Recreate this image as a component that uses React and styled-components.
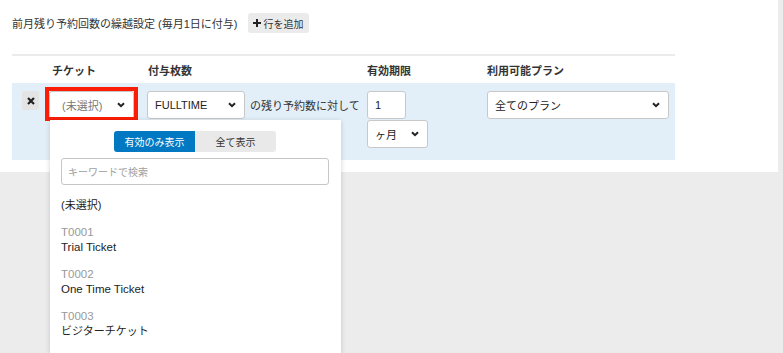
import React from 'react'
import styled, { createGlobalStyle } from 'styled-components'

const GlobalStyle = createGlobalStyle`
  html, body {
    margin: 0;
    height: 100%;
  }
  body {
    background: #ececec;
    font-family: "Liberation Sans", "Noto Sans CJK JP", sans-serif;
    font-size: 11px;
    color: #333;
  }
`

const Panel = styled.div`
  width: 778px;
  height: 172px;
  background: #fff;
  padding-left: 12px;
  box-sizing: border-box;
`

const TitleRow = styled.div`
  display: flex;
  align-items: center;
  gap: 10px;
  padding-top: 13px;
  height: 20px;
`

const Title = styled.span`
  font-size: 11px;
  color: #333;
`

const AddButton = styled.button`
  display: flex;
  align-items: center;
  gap: 3px;
  height: 20px;
  padding: 0 5px;
  border: none;
  border-radius: 3px;
  background: #ebebeb;
  font-family: inherit;
  font-size: 10px;
  color: #333;
`

const Divider = styled.div`
  width: 663px;
  height: 2px;
  margin-top: 21px;
  background: #ebebeb;
`

const Columns = styled.div`
  display: grid;
  grid-template-columns: 37px 98px 220px 120px 188px;
  width: 663px;
`

const HeaderRow = styled(Columns)`
  height: 27px;
  align-items: center;
`

const HeaderCell = styled.div`
  grid-column: ${p => p.$col};
  padding-left: ${p => p.$indent || 0}px;
  font-weight: bold;
  font-size: 11px;
`

const BodyRow = styled(Columns)`
  background: #e3eff8;
  padding: 8px 0 12px;
  align-items: start;
`

const Cell = styled.div`
  display: flex;
  flex-direction: ${p => (p.$stack ? 'column' : 'row')};
  align-items: ${p => (p.$stack ? 'flex-start' : 'center')};
  gap: ${p => p.$gap || 0}px;
  position: relative;
`

const DeleteButton = styled.div`
  width: 17px;
  height: 19px;
  margin-left: 10px;
  border-radius: 2px;
  background: #e4e4e4;
  display: flex;
  align-items: center;
  justify-content: center;
`

const SelectBox = styled.div`
  position: relative;
  box-sizing: border-box;
  width: ${p => p.$width}px;
  height: 28px;
  display: flex;
  align-items: center;
  justify-content: space-between;
  padding: 0 8px 0 ${p => p.$pad || 7}px;
  background: #fff;
  border: 1px solid #c8c8c8;
  border-radius: 3px;
  color: ${p => (p.$placeholder ? '#777' : '#222')};
  font-size: 11px;
`

/* red annotation frame drawn over the selected field */
const Marker = styled.span`
  position: absolute;
  top: -5px;
  left: -5px;
  right: -5px;
  bottom: -3px;
  border: 4px solid #fb1d05;
  pointer-events: none;
`

const NumberInput = styled.div`
  box-sizing: border-box;
  width: 39px;
  height: 28px;
  display: flex;
  align-items: center;
  padding-left: 7px;
  background: #fff;
  border: 1px solid #c8c8c8;
  border-radius: 3px;
  color: #222;
`

const Suffix = styled.span`
  margin-left: 5px;
  font-size: 11px;
  color: #333;
  white-space: nowrap;
`

const Dropdown = styled.div`
  position: absolute;
  top: 29px;
  left: 1px;
  width: 291px;
  height: 233px;
  box-sizing: border-box;
  padding: 11px 12px 0 11px;
  background: #fff;
  box-shadow: 0 1px 5px rgba(0, 0, 0, 0.18);
  z-index: 5;
`

const Toggle = styled.div`
  display: flex;
  justify-content: center;
`

const ToggleButton = styled.div`
  width: 81px;
  height: 21px;
  display: flex;
  align-items: center;
  justify-content: center;
  font-size: 10px;
  background: ${p => (p.$active ? '#0079c2' : '#e9e9e9')};
  color: ${p => (p.$active ? '#fff' : '#333')};
  border-radius: ${p => (p.$active ? '3px 0 0 3px' : '0 3px 3px 0')};
`

const SearchInput = styled.div`
  box-sizing: border-box;
  margin-top: 6px;
  height: 27px;
  border: 1px solid #c6c6c6;
  border-radius: 3px;
  display: flex;
  align-items: center;
  padding-left: 6px;
  color: #a0a0a0;
  font-size: 10px;
`

const OptionList = styled.div`
  display: flex;
  flex-direction: column;
  gap: 12px;
  margin-top: 13px;
`

const Option = styled.div`
  display: flex;
  flex-direction: column;
  line-height: 15px;
  font-size: 11px;
`

const Code = styled.span`
  color: #999;
  font-size: 11.5px;
`

const Name = styled.span`
  color: #222;
  font-size: ${p => (p.$latin ? 11.5 : 11)}px;
`

const Chevron = () => (
  <svg width="8" height="6" viewBox="0 0 8 6">
    <path d="M1 1.2 L4 4.2 L7 1.2" fill="none" stroke="#222" strokeWidth="2" />
  </svg>
)

const Cross = () => (
  <svg width="8" height="8" viewBox="0 0 8 8">
    <path d="M1 1 L7 7 M7 1 L1 7" stroke="#222" strokeWidth="2.2" />
  </svg>
)

const Plus = () => (
  <svg width="8" height="8" viewBox="0 0 8 8">
    <path d="M4 0 V8 M0 4 H8" stroke="#222" strokeWidth="2" />
  </svg>
)

const tickets = [
  { code: 'T0001', name: 'Trial Ticket', latin: true },
  { code: 'T0002', name: 'One Time Ticket', latin: true },
  { code: 'T0003', name: 'ビジターチケット' },
]

export default function App() {
  return (
    <>
      <GlobalStyle />
      <Panel>
        <TitleRow>
          <Title>前月残り予約回数の繰越設定 (毎月1日に付与)</Title>
          <AddButton>
            <Plus />
            行を追加
          </AddButton>
        </TitleRow>
        <Divider />
        <HeaderRow>
          <HeaderCell $col={2} $indent={3}>チケット</HeaderCell>
          <HeaderCell $col={3} $indent={1}>付与枚数</HeaderCell>
          <HeaderCell $col={4}>有効期限</HeaderCell>
          <HeaderCell $col={5}>利用可能プラン</HeaderCell>
        </HeaderRow>
        <BodyRow>
          <Cell>
            <DeleteButton>
              <Cross />
            </DeleteButton>
          </Cell>
          <Cell>
            <SelectBox $width={85} $pad={12} $placeholder>
              (未選択)
              <Chevron />
              <Marker />
            </SelectBox>
            <Dropdown>
              <Toggle>
                <ToggleButton $active>有効のみ表示</ToggleButton>
                <ToggleButton>全て表示</ToggleButton>
              </Toggle>
              <SearchInput>キーワードで検索</SearchInput>
              <OptionList>
                <Option>
                  <Name>(未選択)</Name>
                </Option>
                {tickets.map(t => (
                  <Option key={t.code}>
                    <Code>{t.code}</Code>
                    <Name $latin={t.latin}>{t.name}</Name>
                  </Option>
                ))}
              </OptionList>
            </Dropdown>
          </Cell>
          <Cell>
            <SelectBox $width={98}>
              FULLTIME
              <Chevron />
            </SelectBox>
            <Suffix>の残り予約数に対して</Suffix>
          </Cell>
          <Cell $stack $gap={1}>
            <NumberInput>1</NumberInput>
            <SelectBox $width={61}>
              ヶ月
              <Chevron />
            </SelectBox>
          </Cell>
          <Cell>
            <SelectBox $width={182}>
              全てのプラン
              <Chevron />
            </SelectBox>
          </Cell>
        </BodyRow>
      </Panel>
    </>
  )
}
